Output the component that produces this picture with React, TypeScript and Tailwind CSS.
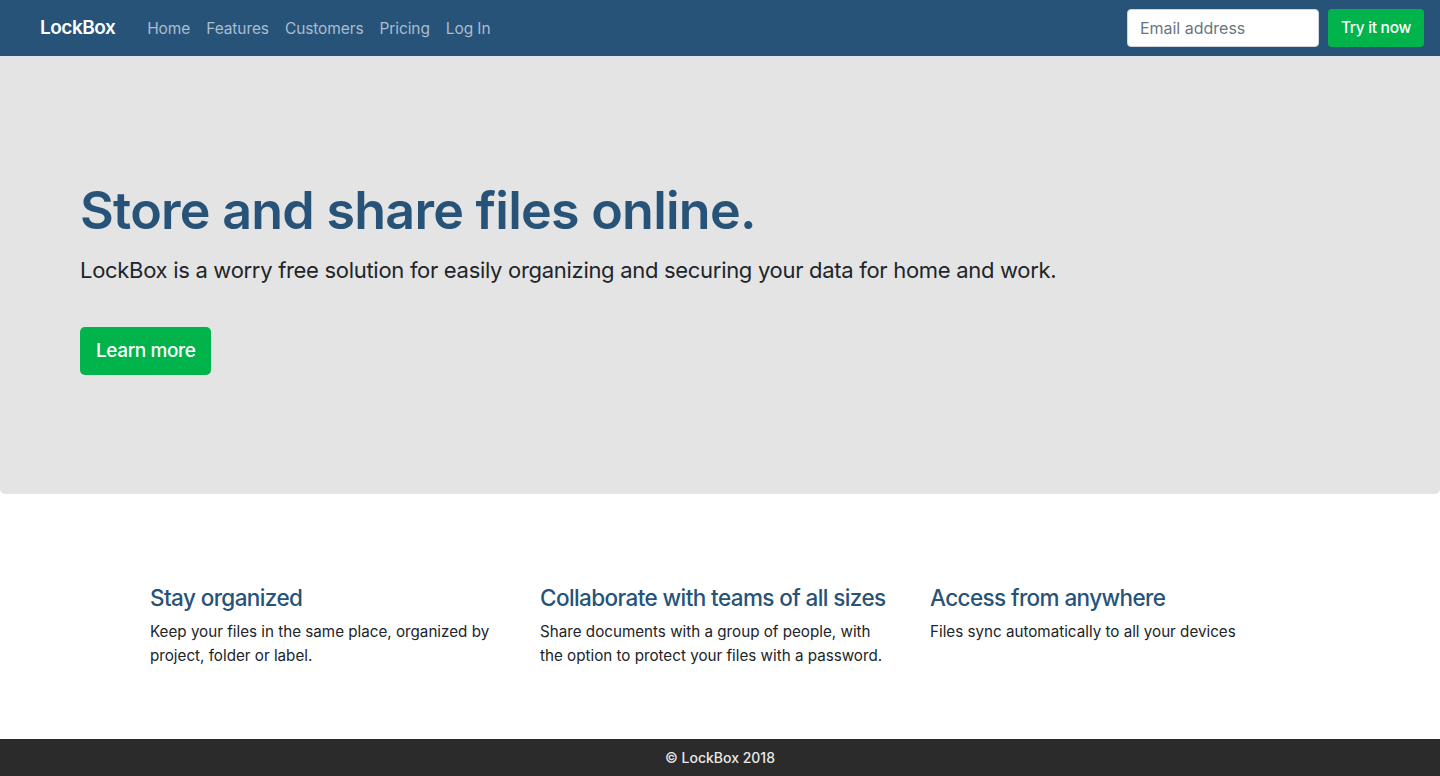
import React from "react";

export default function App() {
  return (
    <div className="h-[776px] overflow-hidden flex flex-col bg-white" style={{ fontFamily: "Inter, 'Noto Sans', sans-serif" }}>
      <nav className="h-14 shrink-0 bg-[#285379] flex items-center pl-10 pr-4">
        <a className="text-white text-[19px] font-semibold tracking-[-0.5px] mr-8 pt-px">LockBox</a>
        <div className="flex items-center gap-4 text-[15.5px] tracking-[-0.1px] text-[#a9bdd0] pt-px">
          <a>Home</a>
          <a>Features</a>
          <a>Customers</a>
          <a>Pricing</a>
          <a>Log In</a>
        </div>
        <div className="ml-auto flex items-center gap-[9px]">
          <input
            placeholder="Email address"
            className="w-[192px] h-[38px] rounded bg-white border border-[#ced4da] px-3 text-[16px] text-[#495057] placeholder:text-[#6c757d] outline-none"
          />
          <button className="h-[38px] px-[13px] rounded bg-[#00b34a] text-white text-[15.5px] font-medium tracking-[-0.3px]">Try it now</button>
        </div>
      </nav>

      <section className="shrink-0 bg-[#e4e4e4] rounded-b-[5px] px-20 pt-[121px] pb-[119px]">
        <h1 className="text-[52px] leading-[67px] font-semibold text-[#285379] tracking-[-0.75px] mb-2">
          Store and share files online.
        </h1>
        <p className="text-[22px] leading-[30px] text-[#212529] tracking-[-0.3px] mt-[11px]">
          LockBox is a worry free solution for easily organizing and securing your data for home and work.
        </p>
        <button className="mt-[42px] h-12 px-4 rounded-[5px] bg-[#00b34a] text-white text-[19px] font-medium tracking-[-0.4px]">
          Learn more
        </button>
      </section>

      <section className="pt-[88px]">
        <div className="w-[1170px] mx-auto grid grid-cols-3">
          <div className="px-[15px]">
            <h3 className="text-[22.5px] leading-[32px] font-medium text-[#285379] tracking-[-0.6px] mb-[6px]">Stay organized</h3>
            <p className="text-[15.2px] leading-6 text-[#212529] pr-[8px]">
              Keep your files in the same place, organized by project, folder or label.
            </p>
          </div>
          <div className="px-[15px]">
            <h3 className="text-[22.5px] leading-[32px] font-medium text-[#285379] tracking-[-0.6px] mb-[6px]">Collaborate with teams of all sizes</h3>
            <p className="text-[15.2px] leading-6 text-[#212529] pr-[8px]">
              Share documents with a group of people, with the option to protect your files with a password.
            </p>
          </div>
          <div className="px-[15px]">
            <h3 className="text-[22.5px] leading-[32px] font-medium text-[#285379] tracking-[-0.6px] mb-[6px]">Access from anywhere</h3>
            <p className="text-[15.2px] leading-6 text-[#212529]">Files sync automatically to all your devices</p>
          </div>
        </div>
      </section>

      <footer className="mt-auto shrink-0 h-[37px] bg-[#2b2b2b] flex items-center justify-center text-[14px] font-medium text-[#e9e9e9]">
        © LockBox 2018
      </footer>
    </div>
  );
}
